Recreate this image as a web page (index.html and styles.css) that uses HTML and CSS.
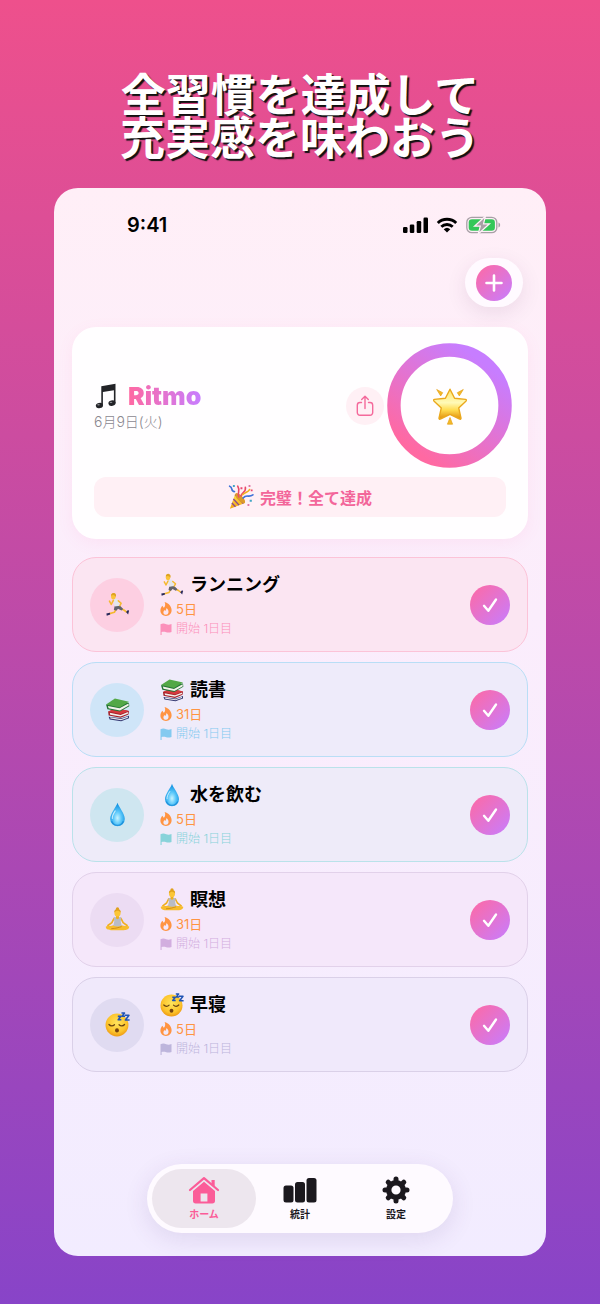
FILE: index.html
```html
<!DOCTYPE html>
<html lang="ja">
<head>
    <meta charset="UTF-8">
    <meta name="viewport" content="width=device-width, initial-scale=1.0">
    <title>Ritmo</title>
    <link rel="stylesheet" href="styles.css">
</head>
<body>
    <!-- shared icons -->
    <svg class="sprite" aria-hidden="true">
        <defs>
            <linearGradient id="gold" x1="0" y1="0" x2="0" y2="1">
                <stop offset="0" stop-color="#ffe24a"/>
                <stop offset="1" stop-color="#f3a410"/>
            </linearGradient>
            <linearGradient id="starFill" x1="0" y1="0" x2="0" y2="1">
                <stop offset="0" stop-color="#ffe36a"/>
                <stop offset="0.45" stop-color="#fffab8"/>
                <stop offset="0.7" stop-color="#ffdb4d"/>
                <stop offset="1" stop-color="#e08c08"/>
            </linearGradient>
            <radialGradient id="water" cx="0.5" cy="0.65" r="0.6">
                <stop offset="0" stop-color="#c8f3ff"/>
                <stop offset="0.45" stop-color="#5cc8fa"/>
                <stop offset="1" stop-color="#0d8fe0"/>
            </radialGradient>
            <radialGradient id="face" cx="0.5" cy="0.4" r="0.6">
                <stop offset="0" stop-color="#ffe45c"/>
                <stop offset="0.7" stop-color="#fcc42c"/>
                <stop offset="1" stop-color="#ee9a14"/>
            </radialGradient>
            <linearGradient id="ringFill" x1="0.25" y1="0.95" x2="0.85" y2="0.15">
                <stop offset="0" stop-color="#ff69a2"/>
                <stop offset="1" stop-color="#c77dff"/>
            </linearGradient>
        </defs>

        <symbol id="runner" viewBox="0 0 24 24">
            <path d="M11 15.500L9 19.500L3.500 21" fill="none" stroke="#f5b92e" stroke-width="1.600" stroke-linejoin="round"/>
            <path d="M14.500 15.500L18.500 17.500L21 19.500" fill="none" stroke="#f5b92e" stroke-width="1.600" stroke-linejoin="round"/>
            <path d="M1.300 20.600l3.400-.6.300 1.500-3.300 1.200z" fill="#27285c"/>
            <path d="M20.200 19.200l1.900-2 1 .8-.9 3.600z" fill="#27285c"/>
            <path d="M9.300 13.300l4.700-.5 3.500 3.400-1.700 1.500-3.300-1.600-1.600 2-2.400-1z" fill="#62636b"/>
            <path d="M7.600 7.200c1.600-1 3.800-.9 5.200.2l1.700 5.700-5.300.7z" fill="#e3e6ec"/>
            <path d="M8 8L6 12L4.300 8.800M12.800 8.500L15.500 10.800L14.300 13" fill="none" stroke="#f5b92e" stroke-width="1.500" stroke-linejoin="round" stroke-linecap="round"/>
            <ellipse cx="8" cy="4.200" rx="2.200" ry="2.900" fill="#fbc43a"/>
            <path d="M5.800 3.500C5.800 1.600 7.200.6 8.800.9c1.700.4 2.200 1.900 1.500 3.900-.6-1.200-1.600-1.800-2.400-1.900z" fill="#dda322"/>
        </symbol>

        <symbol id="books" viewBox="0 0 24 24">
            <path d="M3.500 19l12 1.500 7.500-2.500v2.500l-7.500 2.700L4.500 21.500z" fill="#31356f"/>
            <path d="M5 19.500l10.500 1.700 6.500-2.500v1.200l-6.600 2.300-10.200-1.500z" fill="#e5e5e8"/>
            <path d="M3 14l8-3.200 12 2.600-.5 3.300-7.500 3.200L3.500 17.800z" fill="#a31f28"/>
            <path d="M4.600 15.200l10.400 2 7-2.800v1.600l-7.100 2.800-9.900-1.800z" fill="#f2eee9"/>
            <path d="M3 13.800l8.300-3.200 11.700 2.800-8 3z" fill="#d63a3f"/>
            <path d="M1 7.300l1.300 4.500 12 2.200 9-5.200-.3-3.300z" fill="#247536"/>
            <path d="M2.800 8.600l11.200 2.300 8.600-4.600.2 1.900-8.400 4.800-10.900-2.200z" fill="#f4f2ea"/>
            <path d="M1 7.100L9.500 1.500l13.500 3L14 10z" fill="#53a846"/>
        </symbol>

        <symbol id="drop" viewBox="0 0 24 24">
            <path d="M12 .8C13.200 5 19 11 19 16.300a7 7 0 0 1-14 0C5 11 10.800 5 12 .8z" fill="url(#water)"/>
            <path d="M9.800 8.500c-1.800 2.700-3 5-2.800 7.300" fill="none" stroke="#fff" stroke-width="1" stroke-linecap="round" opacity="0.700"/>
            <path d="M6.400 18.500a6 6 0 0 0 11.200 0" fill="none" stroke="#0879cb" stroke-width="1.200" opacity="0.600"/>
        </symbol>

        <symbol id="lotus" viewBox="0 0 24 24">
            <path d="M8.700 10.800L6.600 15L2.800 17.800M15.300 10.800L17.400 15l3.800 2.800" fill="none" stroke="#efaf20" stroke-width="1.600" stroke-linecap="round" stroke-linejoin="round"/>
            <path d="M.8 18.700c2-1 5 0 7.700-1.400h7c2.700 1.400 5.700.4 7.700 1.400.3 2.200-2.200 3.500-5 3.500H5.800c-2.800 0-5.300-1.300-5-3.500z" fill="#f7bc2c"/>
            <path d="M6 20.800c4.500-.1 7-1.200 10-2" fill="none" stroke="#c88616" stroke-width="0.800"/>
            <path d="M8.300 10.200c1.200-.7 6.200-.7 7.400 0l-.6 3.600.9 4.200c-2.500.9-5.500.9-8 0l.9-4.200z" fill="#b9bcc4"/>
            <path d="M10.600 7.500h2.800v2.800a1.400 1.400 0 0 1-2.800 0z" fill="#efaf20"/>
            <circle cx="12" cy="1.800" r="1.600" fill="#dfa01c"/>
            <ellipse cx="12" cy="5.700" rx="3" ry="3.400" fill="#fbc637"/>
            <path d="M8.900 5.400C8.700 3.200 9.900 2 12 2s3.300 1.200 3.100 3.400C14.200 4.300 13 3.700 12 3.700s-2.200.6-3.100 1.700z" fill="#dfa01c"/>
        </symbol>

        <symbol id="sleepy" viewBox="0 0 24 24">
            <circle cx="11.500" cy="12.500" r="11" fill="url(#face)"/>
            <path d="M3.800 12c1.500 1.700 3.800 1.700 5.300.2M13.500 12.200c1.500 1.500 3.800 1.500 5.300-.2" fill="none" stroke="#6a4412" stroke-width="1.200" stroke-linecap="round"/>
            <ellipse cx="11.500" cy="17.700" rx="1.900" ry="2" fill="#75420f"/>
            <path d="M12.300 4.200h3l-2.600 3.300h3M15.800.9h2.900L16.400 4h2.900M19 3.200h4l-3.400 4.500h4" fill="none" stroke="#2054b4" stroke-width="1.500" stroke-linejoin="round"/>
        </symbol>

        <symbol id="party" viewBox="0 0 24 24">
            <path d="M6.500 9.500L1.800 22.800l14-5.300c-1-4.500-5-8-9.300-8z" fill="url(#gold)"/>
            <path d="M5 13.800l5.200 5.700M3.600 17.500l3.300 3.400M6.500 9.800l7.700 8.200" stroke="#8c4a8f" stroke-width="1.300"/>
            <ellipse cx="11.200" cy="13" rx="2.400" ry="6" transform="rotate(-45 11.200 13)" fill="#dd9a28"/>
            <path d="M10 12C8 8 12 7 9 2M12 11c1-4 5-3 4-8" fill="none" stroke="#e94a67" stroke-width="1.500" stroke-linecap="round"/>
            <path d="M14 13c3-4 5 0 9-3M6 7C2 7 5 3 1.500 2" fill="none" stroke="#3f72d8" stroke-width="1.500" stroke-linecap="round"/>
            <path d="M13.500 10c3-3 5-2 6.500-5" fill="none" stroke="#f2b11d" stroke-width="1.400" stroke-linecap="round"/>
            <path d="M4.500 1h1.800v1.800H4.500zM20 14.500h2v1.800h-2z" fill="#42a7c5"/>
            <path d="M11.500 3h1.800v1.800h-1.800zM21 5h1.700v1.700H21z" fill="#e9476f"/>
            <path d="M18 18.500h1.700v1.700H18zM19 1h1.700v1.700H19z" fill="#df76a7"/>
        </symbol>

        <symbol id="star" viewBox="0 0 36 38">
            <path d="M18 2.200l4.600 9 11 1.200c.8.100 1 .9.500 1.500l-7.400 7 2.300 10.300c.1.800-.7 1.200-1.300.8L18 27.400 8.300 32c-.6.400-1.400 0-1.300-.8l2.300-10.300-7.400-7c-.5-.6-.3-1.400.5-1.500l11-1.200z" fill="url(#starFill)" stroke="#eaa81c" stroke-width="1.400" stroke-linejoin="round"/>
            <path d="M4.700 2.500l6 3.200-2 3.200zM31.300 2.500l-6 3.200 2 3.200zM18 30.500l2.600 6.700h-5.200z" fill="#f3b928" stroke="#e5a21a" stroke-width="0.700" stroke-linejoin="round"/>
        </symbol>

        <symbol id="note" viewBox="0 0 24 26">
            <path d="M7.300 3.200L21.500.8v19.400h-1.600V7.200L8.900 9.100v13.400H7.300z" fill="#222327"/>
            <ellipse cx="5.400" cy="22.500" rx="3.600" ry="2.700" transform="rotate(-14 5.400 22.500)" fill="#222327"/>
            <ellipse cx="18" cy="20.200" rx="3.600" ry="2.700" transform="rotate(-14 18 20.200)" fill="#222327"/>
            <ellipse cx="4.500" cy="21.700" rx="1.300" ry="0.700" fill="#85868b"/>
            <ellipse cx="17" cy="19.400" rx="1.300" ry="0.700" fill="#85868b"/>
        </symbol>

        <symbol id="flame" viewBox="0 0 12 14">
            <path fill-rule="evenodd" d="M4.600 0C8.600 1 11.600 4.300 11.600 8.200c0 3.400-2.400 5.700-5.600 5.700S.4 11.700.4 8.500c0-2 1-3.900 2.200-4.800.2 1 .6 1.700 1.300 2C5.200 4.600 5.700 2.300 4.600 0zM6.500 6.100c0 1.300-.7 1.900-1.100 2.800-.5-.2-.8-.5-.9-1-1.700 1.700-1.500 4.800 1.500 4.900 3.200-.1 3.400-4.500.5-6.700z"/>
        </symbol>

        <symbol id="flag" viewBox="0 0 12 12">
            <path d="M.5 1.200C3 0 4.600.6 6.200 1.200s3.200.6 5.300-.2v7.900c-2.100.9-3.700.8-5.300.3S3 8.600 1.600 9.100V12H.5z"/>
        </symbol>

        <symbol id="check" viewBox="0 0 40 40">
            <path d="M14 20.800l4.300 5L26 14.500" fill="none" stroke="#fff" stroke-width="2.400" stroke-linecap="round" stroke-linejoin="round"/>
        </symbol>
    </svg>

    <h1 class="headline">全習慣を達成して<br>充実感を味わおう</h1>

    <div class="phone">
        <div class="status-bar">
            <span class="time">9:41</span>
            <div class="status-icons">
                <svg width="25" height="16" viewBox="0 0 25 16">
                    <rect x="0" y="10" width="4.500" height="6" rx="1.200"/>
                    <rect x="6.800" y="7.500" width="4.500" height="8.500" rx="1.200"/>
                    <rect x="13.700" y="4" width="4.500" height="12" rx="1.200"/>
                    <rect x="20.500" y="0.500" width="4.500" height="15.500" rx="1.200"/>
                </svg>
                <svg width="22" height="16" viewBox="0 0 22 16">
                    <path d="M1.800 6a13.200 13.200 0 0 1 18.400 0M5.300 9.700a8.300 8.300 0 0 1 11.400 0" fill="none" stroke="#000" stroke-width="2.900"/>
                    <path d="M11 15.600l-3.300-3.400a4.800 4.800 0 0 1 6.600 0z"/>
                </svg>
                <svg width="35" height="18" viewBox="0 0 35 18">
                    <rect x="0.800" y="1.300" width="30" height="15.400" rx="5" fill="none" stroke="#a8a0a6" stroke-width="1.300"/>
                    <rect x="2.700" y="3.200" width="26.200" height="11.600" rx="3.300" fill="#34c759"/>
                    <path d="M32.500 6.500c2.200.8 2.200 4.200 0 5z" fill="#a8a0a6"/>
                    <path d="M19.500 0L8.500 10.200h5.800L12.200 18 23.500 7.800h-6z" fill="#a8a0a6" stroke="#fff0f8" stroke-width="1.200"/>
                </svg>
            </div>
        </div>

        <div class="toolbar">
            <button class="add-btn" aria-label="追加">
                <span class="add-circle">
                    <svg width="18" height="18" viewBox="0 0 18 18"><path d="M9 1.500v15M1.500 9h15" stroke="#fff" stroke-width="2.600" stroke-linecap="round"/></svg>
                </span>
            </button>
        </div>

        <main>
            <section class="summary">
                <div class="summary-top">
                    <div class="brand">
                        <div class="brand-name">
                            <svg width="24" height="26"><use href="#note"/></svg>
                            <h2>Ritmo</h2>
                        </div>
                        <div class="date">6月9日(火)</div>
                    </div>
                    <button class="share-btn" aria-label="共有">
                        <svg width="20" height="22" viewBox="0 0 20 22"><path d="M6.500 7.500H5A2.700 2.700 0 0 0 2.300 10.200v7.300A2.700 2.700 0 0 0 5 20.200h10a2.700 2.700 0 0 0 2.700-2.700v-7.300A2.700 2.700 0 0 0 15 7.500h-1.500M10 13.500V1.500M6.700 4.600L10 1.300l3.300 3.300" fill="none" stroke="#f4699b" stroke-width="1.400" stroke-linecap="round" stroke-linejoin="round"/></svg>
                    </button>
                    <div class="ring">
                        <svg class="ring-track" viewBox="0 0 126 126"><circle cx="63" cy="63" r="56" fill="none" stroke="url(#ringFill)" stroke-width="13.500"/></svg>
                        <svg class="ring-star" width="36" height="38"><use href="#star"/></svg>
                    </div>
                </div>
                <div class="banner">
                    <svg width="26" height="26"><use href="#party"/></svg>
                    完璧！全て達成
                </div>
            </section>

            <ul class="habits">
                <li class="habit pink">
                    <div class="habit-icon"><svg width="25" height="25"><use href="#runner"/></svg></div>
                    <div class="habit-info">
                        <h3><svg width="24" height="24"><use href="#runner"/></svg><label for="habit1">ランニング</label></h3>
                        <p class="streak"><svg width="12" height="14"><use href="#flame"/></svg>5日</p>
                        <p class="start"><svg width="12" height="12"><use href="#flag"/></svg>開始 1日目</p>
                    </div>
                    <div class="check"><input type="checkbox" id="habit1" checked><svg><use href="#check"/></svg></div>
                </li>
                <li class="habit blue">
                    <div class="habit-icon"><svg width="25" height="25"><use href="#books"/></svg></div>
                    <div class="habit-info">
                        <h3><svg width="24" height="24"><use href="#books"/></svg><label for="habit2">読書</label></h3>
                        <p class="streak"><svg width="12" height="14"><use href="#flame"/></svg>31日</p>
                        <p class="start"><svg width="12" height="12"><use href="#flag"/></svg>開始 1日目</p>
                    </div>
                    <div class="check"><input type="checkbox" id="habit2" checked><svg><use href="#check"/></svg></div>
                </li>
                <li class="habit teal">
                    <div class="habit-icon"><svg width="25" height="25"><use href="#drop"/></svg></div>
                    <div class="habit-info">
                        <h3><svg width="24" height="24"><use href="#drop"/></svg><label for="habit3">水を飲む</label></h3>
                        <p class="streak"><svg width="12" height="14"><use href="#flame"/></svg>5日</p>
                        <p class="start"><svg width="12" height="12"><use href="#flag"/></svg>開始 1日目</p>
                    </div>
                    <div class="check"><input type="checkbox" id="habit3" checked><svg><use href="#check"/></svg></div>
                </li>
                <li class="habit purple">
                    <div class="habit-icon"><svg width="25" height="25"><use href="#lotus"/></svg></div>
                    <div class="habit-info">
                        <h3><svg width="24" height="24"><use href="#lotus"/></svg><label for="habit4">瞑想</label></h3>
                        <p class="streak"><svg width="12" height="14"><use href="#flame"/></svg>31日</p>
                        <p class="start"><svg width="12" height="12"><use href="#flag"/></svg>開始 1日目</p>
                    </div>
                    <div class="check"><input type="checkbox" id="habit4" checked><svg><use href="#check"/></svg></div>
                </li>
                <li class="habit lavender">
                    <div class="habit-icon"><svg width="25" height="25"><use href="#sleepy"/></svg></div>
                    <div class="habit-info">
                        <h3><svg width="24" height="24"><use href="#sleepy"/></svg><label for="habit5">早寝</label></h3>
                        <p class="streak"><svg width="12" height="14"><use href="#flame"/></svg>5日</p>
                        <p class="start"><svg width="12" height="12"><use href="#flag"/></svg>開始 1日目</p>
                    </div>
                    <div class="check"><input type="checkbox" id="habit5" checked><svg><use href="#check"/></svg></div>
                </li>
            </ul>
        </main>

        <nav class="tab-bar">
            <a href="#" class="tab active">
                <svg width="32" height="28" viewBox="0 0 32 28">
                    <path d="M2 14L16 2.200 30 14" fill="none" stroke="currentColor" stroke-width="2.200" stroke-linecap="round" stroke-linejoin="round"/>
                    <path d="M23.500 4h3.200v6.600l-3.200-2.700z"/>
                    <path fill-rule="evenodd" d="M16 5.800l11 9.300v9.700a2.700 2.700 0 0 1-2.700 2.700H7.700A2.700 2.700 0 0 1 5 24.800v-9.700zM12.600 17.500v8h6.800v-8z"/>
                </svg>
                ホーム
            </a>
            <a href="#" class="tab">
                <svg width="34" height="28" viewBox="0 0 34 28">
                    <rect x="0.500" y="9.500" width="10" height="17" rx="2.500"/>
                    <rect x="12" y="6" width="10" height="20.500" rx="2.500"/>
                    <rect x="23.500" y="2" width="10" height="24.500" rx="2.500"/>
                </svg>
                統計
            </a>
            <a href="#" class="tab">
                <svg width="28" height="28" viewBox="0 0 28 28">
                    <circle cx="14" cy="14" r="7.300" fill="none" stroke="currentColor" stroke-width="5.400"/>
                    <path d="M14 3v22M3 14h22M6.200 6.200l15.600 15.600M21.800 6.200L6.200 21.800" fill="none" stroke="currentColor" stroke-width="5" stroke-linecap="round" stroke-dasharray="1.500 19 1.500"/>
                </svg>
                設定
            </a>
        </nav>
    </div>
</body>
</html>
```
FILE: styles.css
```css
* {
    margin: 0;
    padding: 0;
    box-sizing: border-box;
}

body {
    font-family: "Inter", "Noto Sans CJK JP", sans-serif;
    background: linear-gradient(180deg, #ee508c 0%, #8844c8 100%);
    min-height: 100vh;
    padding: 71px 9% 48px;
    color: #000;
}

svg {
    display: block;
    flex-shrink: 0;
}

.sprite {
    position: absolute;
    width: 0;
    height: 0;
}

.headline {
    color: #fff;
    font-family: "Noto Sans CJK JP", sans-serif;
    font-size: 45px;
    font-weight: 700;
    line-height: 43px;
    text-align: center;
    text-shadow: 2px 2px 1px #111;
    margin-bottom: 31px;
}

.phone {
    background: linear-gradient(180deg, #ffeff7 0%, #fbedfc 40%, #f2ecff 100%);
    border-radius: 24px;
    padding: 20px 18px 23px;
    display: flex;
    flex-direction: column;
}

.status-bar {
    display: flex;
    justify-content: space-between;
    align-items: center;
    height: 34px;
    padding: 0 27px 0 55px;
}

.time {
    font-size: 20px;
    font-weight: 600;
}

.status-icons {
    display: flex;
    align-items: center;
    gap: 8px;
}

.toolbar {
    display: flex;
    justify-content: flex-end;
    padding: 16px 5px 20px;
}

.add-btn {
    display: grid;
    place-items: center;
    width: 58px;
    height: 49px;
    border: none;
    border-radius: 25px;
    background-color: #fffaff;
    box-shadow: 0 6px 20px rgba(90, 40, 90, 0.1);
    cursor: pointer;
}

.add-circle {
    display: grid;
    place-items: center;
    width: 36px;
    height: 36px;
    border-radius: 50%;
    background: linear-gradient(135deg, #ff69a2, #c77dff);
}

.summary {
    background-color: #fffeff;
    border-radius: 24px;
    padding: 16px;
    box-shadow: 0 4px 16px rgba(255, 105, 162, 0.08);
    margin-bottom: 18px;
}

.summary-top {
    display: flex;
    align-items: center;
    padding-left: 6px;
}

.brand {
    flex: 1;
}

.brand-name {
    display: flex;
    align-items: center;
    gap: 10px;
}

.brand-name h2 {
    font-size: 25px;
    font-weight: 900;
    line-height: 32px;
    background: linear-gradient(90deg, #ff69a2, #c77dff);
    background-clip: text;
    -webkit-background-clip: text;
    color: transparent;
}

.date {
    color: #8b8890;
    font-size: 14px;
    font-weight: 300;
    line-height: 20px;
}

.share-btn {
    display: grid;
    place-items: center;
    width: 38px;
    height: 38px;
    border: none;
    border-radius: 50%;
    background-color: #fff0f5;
    margin-right: 3px;
    cursor: pointer;
}

.ring {
    display: grid;
    place-items: center;
    width: 125px;
    height: 125px;
}

.ring-track,
.ring-star {
    grid-area: 1 / 1;
}

.ring-track {
    width: 100%;
}

.banner {
    display: flex;
    align-items: center;
    justify-content: center;
    gap: 6px;
    height: 40px;
    margin: 9px 6px 6px;
    border-radius: 12px;
    background-color: #fff0f5;
    color: #f3669a;
    font-size: 16px;
    font-weight: 600;
}

.habits {
    list-style: none;
    display: flex;
    flex-direction: column;
    gap: 10px;
}

.habit {
    display: flex;
    align-items: center;
    gap: 16px;
    height: 95px;
    padding: 0 17px;
    border: 1px solid;
    border-radius: 24px;
}

.habit-icon {
    display: grid;
    place-items: center;
    width: 54px;
    height: 54px;
    border-radius: 50%;
}

.habit-info {
    flex: 1;
}

.habit h3 {
    display: flex;
    align-items: center;
    gap: 6px;
    font-size: 18px;
    font-weight: 600;
    line-height: 28px;
}

.habit p {
    display: flex;
    align-items: center;
    gap: 4px;
    line-height: 20px;
}

.habit p svg {
    fill: currentColor;
}

.streak {
    color: #ff9442;
    font-size: 13px;
}

.start {
    font-size: 12px;
    font-weight: 300;
}

.check {
    display: grid;
    width: 40px;
    height: 40px;
}

.check input {
    grid-area: 1 / 1;
    appearance: none;
    border-radius: 50%;
    background: linear-gradient(135deg, #ff69a2, #c77dff);
    cursor: pointer;
}

.check svg {
    grid-area: 1 / 1;
    width: 40px;
    height: 40px;
    pointer-events: none;
}

.pink {
    background-color: #fbe5f2;
    border-color: #fcc3d8;
}

.pink .habit-icon {
    background-color: #fdcfe2;
}

.pink .start {
    color: #fb8fba;
}

.blue {
    background-color: #eeebfa;
    border-color: #b9def6;
}

.blue .habit-icon {
    background-color: #cfe5f8;
}

.blue .start {
    color: #84caf0;
}

.teal {
    background-color: #eeebf9;
    border-color: #bae2ea;
}

.teal .habit-icon {
    background-color: #cfe6f0;
}

.teal .start {
    color: #88d3da;
}

.purple {
    background-color: #f5e7fa;
    border-color: #e2d1ea;
}

.purple .habit-icon {
    background-color: #ecdcf3;
}

.purple .start {
    color: #d2aedf;
}

.lavender {
    background-color: #f0e9fb;
    border-color: #dad0e8;
}

.lavender .habit-icon {
    background-color: #e0dbf1;
}

.lavender .start {
    color: #bdb5dc;
}

.tab-bar {
    display: flex;
    align-self: center;
    margin-top: 92px;
    padding: 5px;
    border-radius: 35px;
    background-color: #fefaff;
    box-shadow: 0 6px 24px rgba(80, 50, 120, 0.12);
}

.tab {
    display: flex;
    flex-direction: column;
    align-items: center;
    gap: 2px;
    width: 104px;
    height: 59px;
    padding-top: 7px;
    border-radius: 30px;
    color: #1b181e;
    fill: currentColor;
    font-size: 10px;
    font-weight: 600;
    line-height: 16px;
    text-decoration: none;
}

.tab + .tab {
    margin-left: -8px;
}

.tab.active {
    background-color: #ede6ee;
    color: #fb5c98;
}
```
